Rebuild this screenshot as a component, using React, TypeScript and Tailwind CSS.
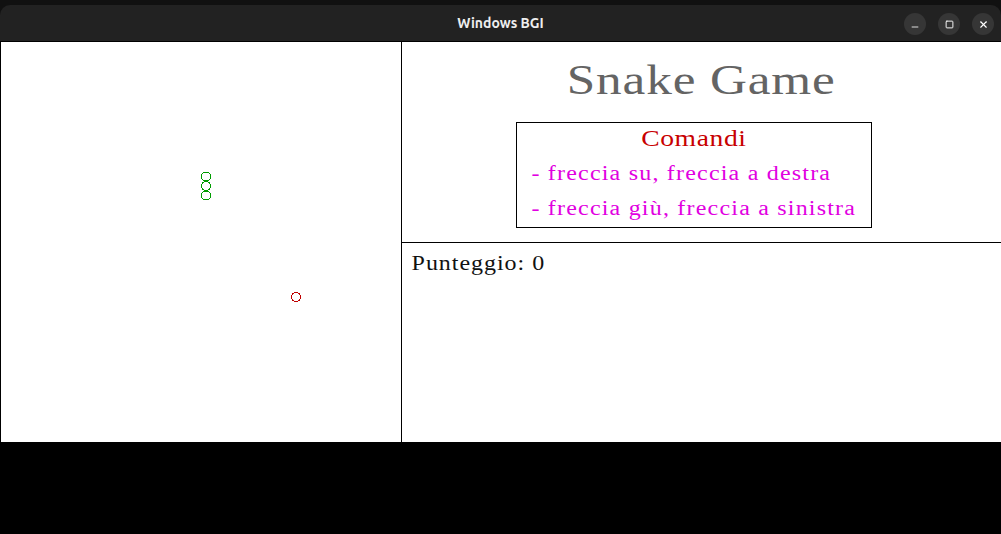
import { Minus, Square, X } from 'lucide-react'

const serif = { fontFamily: '"Liberation Serif", "Times New Roman", serif' }

function TitleBar() {
	return (
		<div className="h-[41px] bg-[#111111] pt-[5px]">
			<div className="relative flex h-full items-center justify-center rounded-t-[10px] bg-[#222222]">
				<span
					className="text-[14px] font-semibold text-[#eeeeee]"
					style={{ fontFamily: 'Ubuntu, "Noto Sans", sans-serif' }}
				>
					Windows BGI
				</span>
				<div className="absolute right-[7px] top-[8px] flex gap-[12px]">
					<button className="flex h-[22px] w-[22px] items-center justify-center rounded-full bg-[#363636] text-white">
						<Minus className="mt-[5px] h-[10px] w-[10px]" strokeWidth={2} />
					</button>
					<button className="flex h-[22px] w-[22px] items-center justify-center rounded-full bg-[#363636] text-white">
						<Square className="h-[9px] w-[9px]" strokeWidth={2.5} />
					</button>
					<button className="flex h-[22px] w-[22px] items-center justify-center rounded-full bg-[#363636] text-white">
						<X className="h-[11px] w-[11px]" strokeWidth={2.5} />
					</button>
				</div>
			</div>
		</div>
	)
}

function Board() {
	// segmenti del serpente + cibo, coordinate della griglia
	const snake = [134.5, 144, 153.5]
	return (
		<div className="w-[402px] border-x border-black">
			<svg width="400" height="400" shapeRendering="crispEdges">
				{snake.map((y) => (
					<circle key={y} cx="205" cy={y} r="4.5" fill="none" stroke="#009c00" strokeWidth="1" />
				))}
				<circle cx="295" cy="255" r="4.5" fill="none" stroke="#c00000" strokeWidth="1" />
			</svg>
		</div>
	)
}

export default function App() {
	return (
		<div className="flex h-[534px] w-[1001px] flex-col overflow-hidden bg-black">
			<TitleBar />
			<div className="flex h-[401px] border-t border-black bg-white" style={serif}>
				<Board />
				<div className="flex flex-1 flex-col">
					<div className="h-[201px] border-b border-black pt-[17px]">
						<div className="text-center">
							<span className="inline-block origin-center scale-x-[1.22] text-[42px] leading-none tracking-[0.7px] text-[#646464]">
								Snake Game
							</span>
						</div>
						<div className="ml-[114px] mt-[21px] h-[106px] w-[356px] border border-black">
							<div className="pt-[4px] text-center">
								<span className="inline-block origin-center scale-x-[1.2] text-[23px] leading-none tracking-[0.5px] text-[#c80000]">
									Comandi
								</span>
							</div>
							<div className="mt-[10px] w-fit origin-left scale-x-[1.2] whitespace-nowrap pl-[12px] text-[20px] leading-none tracking-[1px] text-[#e100e1]">
								- freccia su, freccia a destra
							</div>
							<div className="mt-[15px] w-fit origin-left scale-x-[1.2] whitespace-nowrap pl-[12px] text-[20px] leading-none tracking-[1px] text-[#e100e1]">
								- freccia giù, freccia a sinistra
							</div>
						</div>
					</div>
					<div className="w-fit origin-left scale-x-[1.2] whitespace-nowrap pl-[8px] pt-[10px] text-[20px] leading-none tracking-[0.8px] text-[#111111]">
						Punteggio: 0
					</div>
				</div>
			</div>
		</div>
	)
}
